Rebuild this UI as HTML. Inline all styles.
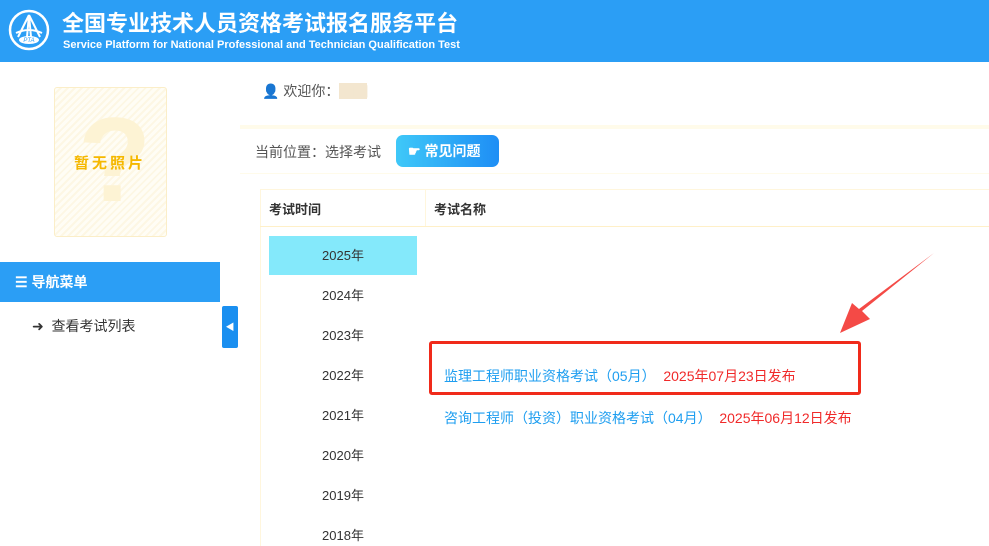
<!DOCTYPE html><html><head><meta charset="utf-8"><style>
*{margin:0;padding:0;box-sizing:border-box}
body{width:989px;height:546px;overflow:hidden;background:#fff;font-family:"Liberation Sans","Noto Sans CJK SC",sans-serif;position:relative;color:#333}
.a{position:absolute}
.hdr{left:0;top:0;width:989px;height:62px;background:#2b9ef5}
</style></head><body>
<div class="a hdr"></div>
<svg class="a" style="left:8px;top:9px" width="42" height="42" viewBox="0 0 42 42"><circle cx="21" cy="21" r="19" fill="none" stroke="#fff" stroke-width="2.5"/><path d="M21 6 L10 28 M21 6 L32 28 M21 6 L19 28 M21 6 L23 28 M8 24 Q21 18 34 24" stroke="#fff" stroke-width="2" fill="none"/><ellipse cx="21" cy="31" rx="10" ry="4" fill="#fff"/><text x="21" y="33" font-size="6" text-anchor="middle" fill="#2b9ef5" font-style="italic">PTA</text></svg>
<div class="a" style="left:62px;top:9px;color:#fff;font-size:22px;line-height:30px;font-weight:bold;white-space:nowrap">全国专业技术人员资格考试报名服务平台</div>
<div class="a" style="left:63px;top:39px;color:#fff;font-size:11px;font-weight:bold;white-space:nowrap">Service Platform for National Professional and Technician Qualification Test</div>
<div class="a" style="left:54px;top:87px;width:113px;height:150px;border:1px solid #fbeec8;border-radius:3px;background:repeating-linear-gradient(135deg,#fffdf5 0 3px,#fdf7e4 3px 5px)"></div>
<div class="a" style="left:78px;top:100px;font-size:120px;font-weight:bold;color:#fdf3d4;line-height:1;font-family:'Liberation Sans'">?</div>
<div class="a" style="left:74px;top:152px;font-size:15px;font-weight:bold;color:#f5b800;letter-spacing:3px">暂无照片</div>
<div class="a" style="left:0;top:262px;width:220px;height:40px;background:#2b9ef5;color:#fff;font-size:14px;font-weight:bold;line-height:40px;padding-left:15px">☰ 导航菜单</div>
<div class="a" style="left:32px;top:316px;font-size:14px;color:#333">➜&nbsp; 查看考试列表</div>
<div class="a" style="left:222px;top:306px;width:16px;height:42px;background:#1a8ff0;border-radius:2px;color:#fff;font-size:9px;line-height:42px;text-align:center">◀</div>
<div class="a" style="left:262px;top:81px;font-size:14px;color:#555">👤&nbsp;欢迎你：<span style="background:#f3e6cf;color:#f3e6cf">▇▇</span></div>
<div class="a" style="left:240px;top:125px;width:749px;height:4px;background:#fffbea"></div>
<div class="a" style="left:255px;top:142px;font-size:14px;color:#555">当前位置：选择考试</div>
<div class="a" style="left:396px;top:135px;width:103px;height:32px;border-radius:7px;background:linear-gradient(90deg,#3fc8f8,#1e8ef5);color:#fff;font-size:14px;font-weight:bold;line-height:32px;padding-left:12px">☛ 常见问题</div>
<div class="a" style="left:240px;top:173px;width:749px;height:1px;background:#fffbea"></div>
<div class="a" style="left:260px;top:189px;width:729px;height:357px;border-left:1px solid #fff6dd;border-top:1px solid #fff6dd"></div>
<div class="a" style="left:260px;top:226px;width:729px;height:1px;background:#fff0c8"></div>
<div class="a" style="left:425px;top:189px;width:1px;height:37px;background:#fff6dd"></div>
<div class="a" style="left:269px;top:199px;font-size:13px;font-weight:bold;color:#333">考试时间</div>
<div class="a" style="left:434px;top:199px;font-size:13px;font-weight:bold;color:#333">考试名称</div>
<div class="a" style="left:269px;top:236px;width:148px;height:39px;background:#84e9fb"></div>
<div class="a" style="left:269px;top:246px;width:148px;font-size:13px;line-height:20px;text-align:center;color:#333">2025年<br><br>2024年<br><br>2023年<br><br>2022年<br><br>2021年<br><br>2020年<br><br>2019年<br><br>2018年</div>
<div class="a" style="left:429px;top:341px;width:432px;height:54px;border:3px solid #f02a1a;border-radius:3px"></div>
<div class="a" style="left:444px;top:366px;font-size:14px;color:#1e9ef0;white-space:nowrap">监理工程师职业资格考试（05月）&nbsp;&nbsp;<span style="color:#f02a2a">2025年07月23日发布</span></div>
<div class="a" style="left:444px;top:408px;font-size:14px;color:#1e9ef0;white-space:nowrap">咨询工程师（投资）职业资格考试（04月）&nbsp;&nbsp;<span style="color:#f02a2a">2025年06月12日发布</span></div>
<svg class="a" style="left:830px;top:245px" width="110" height="95"><path d="M104 8 L32 66 L40 74 L10 88 L22 58 L29 64 Z" fill="#f44a46"/></svg>
</body></html>
